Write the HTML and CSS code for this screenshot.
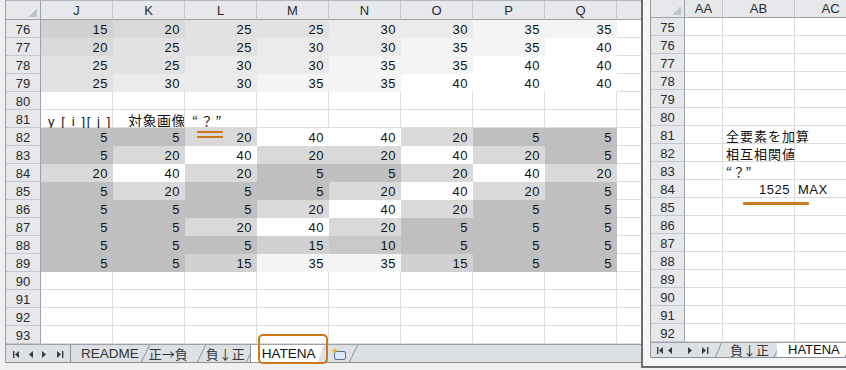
FILE: index.html
```html
<!DOCTYPE html>
<html>
<head>
    <meta charset="UTF-8">
    <title>HATENA</title>
    <link rel="stylesheet" href="styles.css">
</head>
<body>
<div class="book book-left">
    <div class="sheet sheet-left">
        <div class="corner"><i class="tri"></i></div>
        <div class="ch">J</div><div class="ch">K</div><div class="ch">L</div><div class="ch">M</div>
        <div class="ch">N</div><div class="ch">O</div><div class="ch">P</div><div class="ch">Q</div><div class="ch">R</div>

        <div class="rh">76</div>
        <div class="c v15">15</div><div class="c v20">20</div><div class="c v25">25</div><div class="c v25">25</div>
        <div class="c v30">30</div><div class="c v30">30</div><div class="c v35">35</div><div class="c v35">35</div><div class="c"></div>
        <div class="rh">77</div>
        <div class="c v20">20</div><div class="c v25">25</div><div class="c v25">25</div><div class="c v30">30</div>
        <div class="c v30">30</div><div class="c v35">35</div><div class="c v35">35</div><div class="c v40">40</div><div class="c"></div>
        <div class="rh">78</div>
        <div class="c v25">25</div><div class="c v25">25</div><div class="c v30">30</div><div class="c v30">30</div>
        <div class="c v35">35</div><div class="c v35">35</div><div class="c v40">40</div><div class="c v40">40</div><div class="c"></div>
        <div class="rh">79</div>
        <div class="c v25">25</div><div class="c v30">30</div><div class="c v30">30</div><div class="c v35">35</div>
        <div class="c v35">35</div><div class="c v40">40</div><div class="c v40">40</div><div class="c v40">40</div><div class="c"></div>
        <div class="rh">80</div>
        <div class="c"></div><div class="c"></div><div class="c"></div><div class="c"></div>
        <div class="c"></div><div class="c"></div><div class="c"></div><div class="c"></div><div class="c"></div>
        <div class="rh">81</div>
        <div class="c txt"><span class="yij">y [ i ][ j ]</span><span class="jp title">対象画像</span><span class="jp q">“？”</span></div>
        <div class="c"></div><div class="c"></div><div class="c"></div>
        <div class="c"></div><div class="c"></div><div class="c"></div><div class="c"></div><div class="c"></div>
        <div class="rh">82</div>
        <div class="c v5">5</div><div class="c v5">5</div><div class="c v20">20</div><div class="c v40">40</div>
        <div class="c v40">40</div><div class="c v20">20</div><div class="c v5">5</div><div class="c v5">5</div><div class="c"></div>
        <div class="rh">83</div>
        <div class="c v5">5</div><div class="c v20">20</div><div class="c v40">40</div><div class="c v20">20</div>
        <div class="c v20">20</div><div class="c v40">40</div><div class="c v20">20</div><div class="c v5">5</div><div class="c"></div>
        <div class="rh">84</div>
        <div class="c v20">20</div><div class="c v40">40</div><div class="c v20">20</div><div class="c v5">5</div>
        <div class="c v5">5</div><div class="c v20">20</div><div class="c v40">40</div><div class="c v20">20</div><div class="c"></div>
        <div class="rh">85</div>
        <div class="c v5">5</div><div class="c v20">20</div><div class="c v5">5</div><div class="c v5">5</div>
        <div class="c v20">20</div><div class="c v40">40</div><div class="c v20">20</div><div class="c v5">5</div><div class="c"></div>
        <div class="rh">86</div>
        <div class="c v5">5</div><div class="c v5">5</div><div class="c v5">5</div><div class="c v20">20</div>
        <div class="c v40">40</div><div class="c v20">20</div><div class="c v5">5</div><div class="c v5">5</div><div class="c"></div>
        <div class="rh">87</div>
        <div class="c v5">5</div><div class="c v5">5</div><div class="c v20">20</div><div class="c v40">40</div>
        <div class="c v20">20</div><div class="c v5">5</div><div class="c v5">5</div><div class="c v5">5</div><div class="c"></div>
        <div class="rh">88</div>
        <div class="c v5">5</div><div class="c v5">5</div><div class="c v5">5</div><div class="c v15">15</div>
        <div class="c v10">10</div><div class="c v5">5</div><div class="c v5">5</div><div class="c v5">5</div><div class="c"></div>
        <div class="rh">89</div>
        <div class="c v5">5</div><div class="c v5">5</div><div class="c v15">15</div><div class="c v35">35</div>
        <div class="c v35">35</div><div class="c v15">15</div><div class="c v5">5</div><div class="c v5">5</div><div class="c"></div>
        <div class="rh">90</div>
        <div class="c"></div><div class="c"></div><div class="c"></div><div class="c"></div>
        <div class="c"></div><div class="c"></div><div class="c"></div><div class="c"></div><div class="c"></div>
        <div class="rh">91</div>
        <div class="c"></div><div class="c"></div><div class="c"></div><div class="c"></div>
        <div class="c"></div><div class="c"></div><div class="c"></div><div class="c"></div><div class="c"></div>
        <div class="rh">92</div>
        <div class="c"></div><div class="c"></div><div class="c"></div><div class="c"></div>
        <div class="c"></div><div class="c"></div><div class="c"></div><div class="c"></div><div class="c"></div>
        <div class="rh">93</div>
        <div class="c"></div><div class="c"></div><div class="c"></div><div class="c"></div>
        <div class="c"></div><div class="c"></div><div class="c"></div><div class="c"></div><div class="c"></div>
    </div>
    <div class="tabbar">
        <div class="nav">
            <svg width="62" height="18" viewBox="0 0 62 18">
                <path d="M7 6h1.4v7H7z M13 6v7L9 9.5z M27 6v7l-4-3.5z M36 6v7l4-3.5z M51 6v7l4-3.5z M56 6h1.4v7H56z" fill="#3c3c3c"/>
            </svg>
        </div>
        <div class="tabs">
            <div class="tab first">README</div>
            <div class="tab jp-tab t2">正→負</div>
            <div class="tab jp-tab t3">負↓正</div>
            <div class="tab active">HATENA</div>
            <div class="tab newsheet">
                <svg width="16" height="14" viewBox="0 0 16 14">
                    <rect x="3.5" y="4.5" width="11" height="8" rx="1.5" fill="#dfe8f5" stroke="#56708f"/>
                    <path d="M4 0.5l1 2.2 2.2 1-2.2 1-1 2.2-1-2.2-2.2-1 2.2-1z" fill="#f2b01e"/>
                </svg>
            </div>
        </div>
    </div>
</div>

<div class="book book-right">
    <div class="sheet-box">
        <div class="sheet sheet-right">
            <div class="corner"><i class="tri"></i></div>
            <div class="ch">AA</div><div class="ch">AB</div><div class="ch">AC</div>

            <div class="rh">75</div><div class="c"></div><div class="c"></div><div class="c"></div>
            <div class="rh">76</div><div class="c"></div><div class="c"></div><div class="c"></div>
            <div class="rh">77</div><div class="c"></div><div class="c"></div><div class="c"></div>
            <div class="rh">78</div><div class="c"></div><div class="c"></div><div class="c"></div>
            <div class="rh">79</div><div class="c"></div><div class="c"></div><div class="c"></div>
            <div class="rh">80</div><div class="c"></div><div class="c"></div><div class="c"></div>
            <div class="rh">81</div><div class="c"></div><div class="c txt"><span class="jp">全要素を加算</span></div><div class="c"></div>
            <div class="rh">82</div><div class="c"></div><div class="c txt"><span class="jp">相互相関値</span></div><div class="c"></div>
            <div class="rh">83</div><div class="c"></div><div class="c txt"><span class="jp q2">“？”</span></div><div class="c"></div>
            <div class="rh">84</div><div class="c"></div><div class="c">1525</div><div class="c txt">MAX</div>
            <div class="rh">85</div><div class="c"></div><div class="c"></div><div class="c"></div>
            <div class="rh">86</div><div class="c"></div><div class="c"></div><div class="c"></div>
            <div class="rh">87</div><div class="c"></div><div class="c"></div><div class="c"></div>
            <div class="rh">88</div><div class="c"></div><div class="c"></div><div class="c"></div>
            <div class="rh">89</div><div class="c"></div><div class="c"></div><div class="c"></div>
            <div class="rh">90</div><div class="c"></div><div class="c"></div><div class="c"></div>
            <div class="rh">91</div><div class="c"></div><div class="c"></div><div class="c"></div>
            <div class="rh">92</div><div class="c"></div><div class="c"></div><div class="c"></div>
        </div>
        <div class="tabbar tabbar-right">
            <div class="nav">
                <svg width="62" height="16" viewBox="0 0 62 16">
                    <path d="M6 5h1.4v7H6z M12 5v7L8 8.5z M21 5v7l-4-3.5z M37 5v7l4-3.5z M51 5v7l4-3.5z M56 5h1.4v7H56z" fill="#3c3c3c"/>
                </svg>
            </div>
            <div class="tabs">
                <div class="tab jp-tab lead">負↓正</div>
                <div class="tab active">HATENA</div>
            </div>
        </div>
    </div>
</div>

<div class="mark mark-q"></div>
<div class="mark mark-tab"></div>
<div class="mark mark-max"></div>
</body>
</html>
```

FILE: styles.css
```css
*{ margin:0; padding:0; box-sizing:border-box; }
body{ width:846px; height:370px; overflow:hidden; position:relative; background:#f0f0f0; font:13px/1 "Liberation Sans", "Noto Sans CJK JP", sans-serif; color:#111; }

/* windows */
.book{ position:absolute; top:0; background:#fff; }
.book-left{ left:5px; width:700px; height:363px; border-left:1px solid #9a9da2; border-top:1px solid #b4b7bb; display:flex; flex-direction:column; }
.book-right{ left:641px; width:205px; height:368px; background:#f6f6f7; border-left:2px solid #6c6c6c; border-bottom:2px solid #6c6c6c; padding:0 0 8px 7px; }
.sheet-box{ height:358px; border-left:1px solid #9a9da2; background:#fff; display:flex; flex-direction:column; }

/* grid */
.sheet{ display:grid; background:#fff; }
.sheet-left{ grid-template-columns:35px repeat(8, 72px) 72px; grid-template-rows:19px; grid-auto-rows:18px; }
.sheet-right{ grid-template-columns:34px 38px 72px 72px; grid-template-rows:18px; grid-auto-rows:18px; }

.corner, .ch, .rh{ background:#e6e8eb; color:#2a2a2a; font-size:13px; }
.corner{ display:flex; justify-content:flex-end; align-items:flex-end; padding:0 3px 2px 0; border-right:1px solid #9ea2a7; border-bottom:1px solid #9ea2a7; }
.tri{ display:block; width:9px; height:9px; background:linear-gradient(135deg, transparent 50%, #bfc2c6 50%); }
.ch{ display:flex; align-items:center; justify-content:center; border-right:1px solid #c4c7cb; border-bottom:1px solid #9ea2a7; }
.rh{ display:flex; align-items:center; justify-content:center; border-right:1px solid #9ea2a7; border-bottom:1px solid #c4c7cb; padding-top:1px; }

.c{ border-right:1px solid #dadcdd; border-bottom:1px solid #dadcdd; text-align:right; padding:2px 4px 0 0; line-height:16px; letter-spacing:0.5px; white-space:nowrap; }
.txt{ text-align:left; padding-left:3px; overflow:visible; }
.jp{ font-family:"Noto Sans CJK JP", sans-serif; font-size:13px; line-height:16px; letter-spacing:1px; }
.yij{ letter-spacing:1.6px; padding-left:4px; margin-right:16px; }
.title{ font-size:14px; letter-spacing:0.5px; }
.q{ margin-left:6px; letter-spacing:2px; }
.q2{ letter-spacing:0; }

.v5{ background:#bfbfbf; border-color:#bfbfbf; }
.v10{ background:#c8c8c8; border-color:#c8c8c8; }
.v15{ background:#d1d1d1; border-color:#d1d1d1; }
.v20{ background:#d9d9d9; border-color:#d9d9d9; }
.v25{ background:#e2e2e2; border-color:#e2e2e2; }
.v30{ background:#ebebeb; border-color:#ebebeb; }
.v35{ background:#f4f4f4; border-color:#f4f4f4; }
.v40{ background:#fff; border-color:#fff; }

/* sheet tabs */
.tabbar{ display:flex; height:19px; background:#dde1e6; border-top:1px solid #9ea2a7; border-bottom:1px solid #8c9095; }
.tabbar-right{ height:16px; }
.nav{ width:64px; display:flex; align-items:center; }
.tabs{ display:flex; }
.tab{ position:relative; padding:0 6px 0 10px; font-size:13.5px; line-height:17px; color:#333; white-space:nowrap; }
.tab::after{ content:""; position:absolute; right:-1px; top:0; bottom:0; width:1px; background:#8c9095; transform:skewX(-26deg); }
.tab.first{ border-left:1px solid #8c9095; }
.jp-tab{ font-family:"Noto Sans CJK JP", sans-serif; font-size:13px; }
.t2{ padding:0 13px 0 4px; }
.t3{ padding:0 5px 0 5px; }
.tab.active{ background:#fff; color:#111; padding:0 8px 0 11px; border-left:1px solid #8c9095; clip-path:polygon(0 0, 100% 0, calc(100% - 6px) 100%, 0 100%); }
.newsheet{ padding:2px 6px 0 7px; }
.tabbar-right .tab{ line-height:14px; font-size:13px; }
.tabbar-right .jp-tab{ padding:0 8px 0 17px; }
.lead::before{ content:""; position:absolute; left:5px; top:0; bottom:0; width:1px; background:#8c9095; transform:skewX(-22deg); }
.tabbar-right .tab.active{ clip-path:none; border-left:none; padding-left:11px; }

/* orange annotations */
.mark{ position:absolute; border-color:#c9781c; border-style:solid; }
.mark-q{ left:197px; top:131px; width:26px; height:7px; border-width:2px 0; border-radius:1px; }
.mark-tab{ left:258px; top:334px; width:70px; height:30px; border-width:2px; border-radius:5px; }
.mark-max{ left:743px; top:202px; width:66px; height:0; border-width:2px 0 1px; border-radius:1px; }
```
